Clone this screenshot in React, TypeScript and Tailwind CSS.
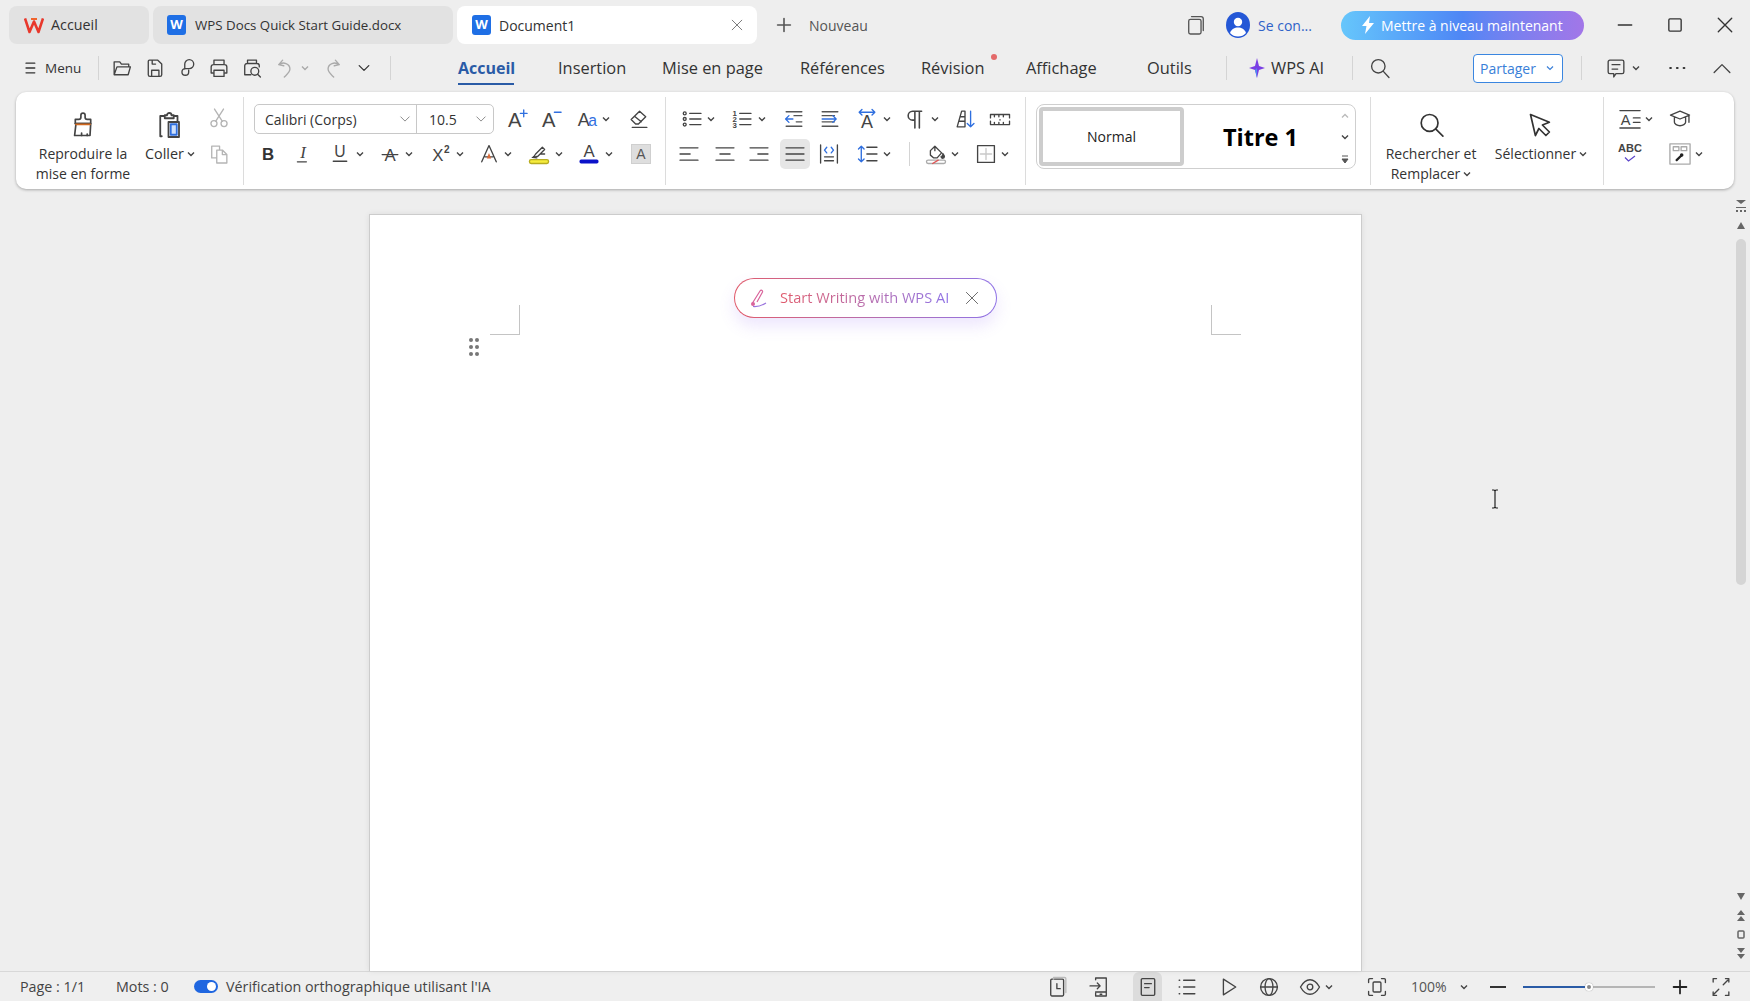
import type { ReactNode } from "react"

function Ico({ children, size = 20, className = "", stroke = "#444" }: { children: ReactNode; size?: number; className?: string; stroke?: string }) {
  return (
    <svg width={size} height={size} viewBox="0 0 20 20" fill="none" stroke={stroke} strokeWidth={1.2} strokeLinecap="round" strokeLinejoin="round" className={"shrink-0 overflow-visible " + (size === 20 ? "scale-[1.12] " : "") + className}>
      {children}
    </svg>
  )
}

function Chev({ className = "" }: { className?: string }) {
  return (
    <svg width="8" height="6" viewBox="0 0 8 6" fill="none" stroke="#444" strokeWidth={1.4} className={"shrink-0 " + className}>
      <path d="M1 1.5 4 4.5 7 1.5" />
    </svg>
  )
}

function Sep({ className = "" }: { className?: string }) {
  return <div className={"h-[24px] w-px shrink-0 bg-[#d4d4d4] " + className} />
}

function Letter({ ch, x = 10, y = 15, size = 16, weight = 400, fill = "#444", style = "normal", family = "'Liberation Sans',sans-serif" }: { ch: string; x?: number; y?: number; size?: number; weight?: number; fill?: string; style?: string; family?: string }) {
  return (
    <text x={x} y={y} fontSize={size} fontWeight={weight} fill={fill} stroke="none" textAnchor="middle" fontStyle={style} fontFamily={family}>
      {ch}
    </text>
  )
}

function WordIcon() {
  return (
    <div className="flex h-[20px] w-[19px] shrink-0 items-center justify-center rounded-[3px] bg-[#1f6fe5] text-[13px] font-bold text-white">W</div>
  )
}

function BigButton({ icon, children, className = "" }: { icon: ReactNode; children: ReactNode; className?: string }) {
  return (
    <div className={"flex shrink-0 flex-col items-center pt-[14px] text-center text-[14px] leading-[20px] text-[#333] " + className}>
      <div className="flex h-[28px] items-center justify-center">{icon}</div>
      <div className="mt-[5px] whitespace-nowrap">{children}</div>
    </div>
  )
}

function Row({ children }: { children: ReactNode }) {
  return <div className="flex h-[30px] items-center">{children}</div>
}

export default function App() {
  return (
    <div className="flex h-screen w-full flex-col overflow-hidden bg-[#eeeeee] font-['Open_Sans','Noto_Sans',sans-serif] text-[#333]">
      {/* title bar */}
      <div className="flex h-[49px] shrink-0 items-center pl-[9px] pt-[6px] pb-[5px] text-[14px]">
        <div className="flex h-[38px] w-[140px] shrink-0 items-center rounded-[8px] bg-[#e2e2e2] pl-[15px]">
          <svg width="20" height="18" viewBox="0 0 20 18" fill="none" className="shrink-0">
            <path d="M1 2.5 5.5 16 10 5.5 14.5 16 19 2.5" stroke="#e8382c" strokeWidth={2.6} strokeLinejoin="round" />
            <path d="M7 3h6" stroke="#f0642e" strokeWidth={2} />
          </svg>
          <span className="ml-[7px] text-[14.3px]">Accueil</span>
        </div>
        <div className="ml-[4px] flex h-[38px] w-[300px] shrink-0 items-center rounded-[8px] bg-[#e2e2e2] pl-[14px]">
          <WordIcon />
          <span className="ml-[9px] whitespace-nowrap pt-px text-[13.3px]">WPS Docs Quick Start Guide.docx</span>
        </div>
        <div className="ml-[4px] flex h-[38px] w-[300px] shrink-0 items-center rounded-[8px] bg-white pl-[15px]">
          <WordIcon />
          <span className="ml-[8px]">Document1</span>
          <Ico size={16} stroke="#777" className="ml-auto mr-[12px]"><path d="M4 4l12 12M16 4 4 16" /></Ico>
        </div>
        <Ico size={16} stroke="#555" className="ml-[19px]"><path d="M10 2v16M2 10h16" strokeWidth={2} /></Ico>
        <span className="ml-[17px] w-[59px] shrink-0 text-[#555]">Nouveau</span>
        <Ico className="ml-[318px]" stroke="#555">
          <rect x="3.5" y="5" width="11" height="13" rx="1.5" />
          <path d="M6 2.5h8.5a2 2 0 0 1 2 2V15" />
        </Ico>
        <svg width="24" height="26" viewBox="0 0 24 26" className="ml-[20px] shrink-0">
          <ellipse cx="12" cy="13" rx="12" ry="13" fill="#2457d6" />
          <circle cx="12" cy="10" r="4.2" fill="#fff" />
          <path d="M4 21c1.5-4 4.5-5.5 8-5.5s6.500 1.500 8 5.500c-2 2.500-5 3.500-8 3.500s-6-1-8-3.500z" fill="#fff" />
        </svg>
        <span className="ml-[8px] w-[54px] shrink-0 whitespace-nowrap text-[#2f62c8]">Se con...</span>
        <div className="ml-[29px] flex h-[29px] w-[243px] shrink-0 items-center rounded-full bg-linear-to-r from-[#66c6fb] via-[#4f86f5] to-[#a276e8] pl-[19px] text-white">
          <svg width="16" height="18" viewBox="0 0 16 18" className="shrink-0"><path d="M10 0 2 10h4.500L5 18l9-11H9z" fill="#fff" /></svg>
          <span className="ml-[5px] whitespace-nowrap">Mettre à niveau maintenant</span>
        </div>
        <Ico className="ml-[31px]" stroke="#333"><path d="M4 10h12" /></Ico>
        <Ico className="ml-[30px]" stroke="#333"><rect x="4.500" y="4.500" width="11" height="11" rx="1" /></Ico>
        <Ico className="ml-[30px]" stroke="#333"><path d="M4 4l12 12M16 4 4 16" /></Ico>
      </div>

      {/* menu bar */}
      <div className="flex h-[38px] shrink-0 items-center text-[16.4px]">
        <Ico size={16} stroke="#333" className="ml-[22px]"><path d="M5 4h11M5 10h11M5 16h11" strokeWidth={1.6} /></Ico>
        <span className="ml-[7px] w-[37px] shrink-0 text-[13.5px]">Menu</span>
        <Sep className="ml-[16px]" />
        <Ico className="ml-[13px]"><path d="M3 16V4.500h5l1.500 2H16V9M3 16h12.500l2-7H5.500L3 16z" /></Ico>
        <Ico className="ml-[13px]"><path d="M5 3h7.500L16 6.500V16a1.500 1.500 0 0 1-1.500 1.500h-9A1.500 1.500 0 0 1 4 16V4a1 1 0 0 1 1-1zM7 17.500V12h6.500v5.500M7.500 3v3.500h3" /></Ico>
        <Ico className="ml-[12px]"><path d="M8 11V6.500a4 4 0 1 1 4 4H8.500a3 3 0 1 0 3 3V12" /></Ico>
        <Ico className="ml-[12px]"><path d="M5.500 7V3h9v4M4.500 14.500H3V9a2 2 0 0 1 2-2h10a2 2 0 0 1 2 2v5.500h-1.500M5.500 12h9v5.500h-9z" /></Ico>
        <Ico className="ml-[13px]"><path d="M6 6V3h8v3M9 16H3.500V8a2 2 0 0 1 2-2h9a2 2 0 0 1 2 2v1" /><circle cx="12.500" cy="13" r="3.500" /><path d="M15 15.500l2.500 2.500" /></Ico>
        <Ico className="ml-[14px]" stroke="#aaa"><path d="M7 3 3.500 7l4.500 1M3.500 7c4-3 10-1 10 4 0 3-3 5-5 7" /></Ico>
        <Chev className="ml-[5px] opacity-40" />
        <Ico className="ml-[13px]" stroke="#aaa"><path d="M13 3l3.500 4-4.500 1M16.500 7c-4-3-10-1-10 4 0 3 3 5 5 7" /></Ico>
        <Ico size={16} stroke="#333" className="ml-[14px]"><path d="M4 7l6 6 6-6" strokeWidth={1.6} /></Ico>
        <Sep className="ml-[18px]" />
        <div className="relative ml-[67px] w-[56px] shrink-0 whitespace-nowrap text-[16px] font-bold text-[#2a5ba6]">
          Accueil
          <div className="absolute -bottom-[5px] left-0 h-[2px] w-full bg-[#2a5ba6]" />
        </div>
        <span className="ml-[44px] w-[66px] shrink-0">Insertion</span>
        <span className="ml-[38px] w-[101px] shrink-0 whitespace-nowrap">Mise en page</span>
        <span className="ml-[37px] w-[81px] shrink-0">Références</span>
        <div className="relative ml-[40px] w-[62px] shrink-0">
          Révision
          <div className="absolute -top-[2px] left-[70px] h-[6px] w-[6px] rounded-full bg-[#e46a6a]" />
        </div>
        <span className="ml-[43px] w-[71px] shrink-0">Affichage</span>
        <span className="ml-[50px] w-[44px] shrink-0">Outils</span>
        <Sep className="ml-[35px]" />
        <svg width="16" height="20" viewBox="0 0 16 20" className="ml-[22px] shrink-0">
          <path d="M8 0 10 8l6 2-6 2-2 8-2-8-6-2 6-2z" fill="#7a3fe4" />
          <path d="M8 10v10l-2-8z" fill="#4d8df0" />
        </svg>
        <span className="ml-[6px] w-[56px] shrink-0 whitespace-nowrap">WPS AI</span>
        <Sep className="ml-[25px]" />
        <Ico className="ml-[17px]"><circle cx="8.500" cy="8.500" r="6" /><path d="M13 13l5 5.500" /></Ico>
        <div className="ml-[83px] flex h-[29px] w-[90px] shrink-0 items-center rounded-[4px] border border-[#3a86e0] bg-white pl-[6px] text-[14px] text-[#3a7fd8]">
          Partager
          <svg width="8" height="6" viewBox="0 0 8 6" fill="none" stroke="#3a7fd8" strokeWidth={1.2} className="ml-auto mr-[8px]"><path d="M1 1.500 4 4.500 7 1.500" /></svg>
        </div>
        <Sep className="ml-[18px]" />
        <Ico className="ml-[24px]"><path d="M4.500 3h11a1.500 1.500 0 0 1 1.500 1.500v9a1.500 1.500 0 0 1-1.500 1.500H10l-2 3v-3H4.500A1.500 1.500 0 0 1 3 13.500v-9A1.500 1.500 0 0 1 4.500 3zM6.500 7h7M6.500 11h5" /></Ico>
        <Chev className="ml-[6px]" />
        <Ico className="ml-[27px]" stroke="#333"><path d="M4 10h.5M10 10h.5M16 10h.5" strokeWidth={2} /></Ico>
        <Ico className="ml-[25px]"><path d="M3 14l7-7 7 7" /></Ico>
      </div>

      {/* ribbon */}
      <div className="ml-[16px] mt-[5px] flex h-[97px] w-[1718px] shrink-0 rounded-[10px] bg-white py-[5px] shadow-[0_1px_3px_rgba(0,0,0,0.3)]">
        <div className="flex h-[88px] w-[228px] shrink-0 border-r border-[#dcdcdc] pl-[21px]">
          <BigButton
            className="w-[92px]"
            icon={
              <Ico size={28}>
                <path d="M8.500 4.500V3a1.500 1.500 0 0 1 3 0v1.500c0 1 .5 1.500 1.500 1.500h2.500v3H4.500V6H7c1 0 1.500-.5 1.500-1.500z" />
                <path d="M4.500 9h11l-.5 8.500H4l1-8.500z" />
                <path d="M5 9.500h10" stroke="#d2691e" />
                <path d="M9 17.500v-1.800M13 17.500v-1" />
              </Ico>
            }
          >
            Reproduire la
            <br />
            mise en forme
          </BigButton>
          <BigButton
            className="ml-[11px] w-[60px]"
            icon={
              <Ico size={30}>
                <path d="M4.500 17.500H3.500V4h3M12.500 4h2.500v3.500M6.500 5.500V3.500H8a1.500 1.500 0 0 1 3 0h1.500v2z" />
                <rect x="9" y="8" width="7" height="10" fill="#fff" stroke="#444" />
                <rect x="10.500" y="9.500" width="4" height="7" fill="#cfe0fb" stroke="#2f6fdf" />
              </Ico>
            }
          >
            <span className="inline-flex items-center text-[14.4px]">Coller<Chev className="ml-[3px]" /></span>
          </BigButton>
          <div className="ml-[9px] flex flex-col pt-[11px]">
            <Ico stroke="#b5b5b5"><circle cx="5.500" cy="15" r="2.700" /><circle cx="14.500" cy="15" r="2.700" /><path d="M7 13 14 2M13 13 6 2" /></Ico>
            <Ico stroke="#b5b5b5" className="mt-[16px]"><path d="M7.500 13.500H3.500V3h7v3M8 6.500h5l4 4V18H8zM13 6.500V10.500h4" /></Ico>
          </div>
        </div>

        <div className="flex h-[88px] w-[422px] shrink-0 flex-col gap-[5px] border-r border-[#dcdcdc] pt-[7px]">
          <Row>
            <div className="ml-[10px] flex h-[30px] w-[240px] shrink-0 items-center rounded-[5px] border border-[#c8c8c8] text-[14px]">
              <div className="flex h-full w-[162px] items-center border-r border-[#c8c8c8] pl-[10px]">
                Calibri (Corps)
                <Ico size={14} stroke="#777" className="ml-auto mr-[4px]"><path d="M4 7l6 6 6-6" /></Ico>
              </div>
              <div className="flex h-full flex-1 items-center pl-[12px]">
                10.5
                <Ico size={14} stroke="#777" className="ml-auto mr-[5px]"><path d="M4 7l6 6 6-6" /></Ico>
              </div>
            </div>
            <Ico className="ml-[13px]"><Letter ch="A" x={8} y={17} size={18} /><path d="M13 5h6M16 2v6" stroke="#2f6fdf" /></Ico>
            <Ico className="ml-[14px]"><Letter ch="A" x={8} y={17} size={18} /><path d="M13 4h6" stroke="#2f6fdf" /></Ico>
            <Ico className="ml-[16px]"><Letter ch="A" x={7} y={16} size={16} /><Letter ch="a" x={15} y={16} size={14} fill="#2f6fdf" /></Ico>
            <Chev className="ml-[5px]" />
            <Ico className="ml-[19px]"><path d="M3 10.500 10.500 3l5.500 5-6.500 6.500H7zM6 7.500l6 5M4 17.500h13" /></Ico>
          </Row>
          <Row>
            <Ico className="ml-[14px]"><Letter ch="B" y={15.500} size={15} weight={700} fill="#333" /></Ico>
            <Ico className="ml-[15px]"><Letter ch="I" y={14} size={15} style="italic" family="'Liberation Serif',serif" /><path d="M5 17h8" /></Ico>
            <Ico className="ml-[17px]"><Letter ch="U" y={13} size={14} /><path d="M4 16.500h12" /></Ico>
            <Chev className="ml-[6px]" />
            <Ico className="ml-[16px]"><Letter ch="A" y={16} size={15} /><path d="M3 10.500h14" /></Ico>
            <Chev className="ml-[5px]" />
            <Ico className="ml-[17px]"><Letter ch="X" x={8} y={16} size={15} /><Letter ch="2" x={16} y={9} size={9} weight={700} /></Ico>
            <Chev className="ml-[6px]" />
            <Ico className="ml-[15px]"><Letter ch="A" y={17} size={20} fill="#fff" /><path d="M3.500 17 10 2.500 16.500 17M6.500 12.500h7" /><path d="M10 9 12 14H8z" fill="#d96b3a" stroke="none" /></Ico>
            <Chev className="ml-[5px]" />
            <Ico className="ml-[17px]"><path d="M5 13l2-3 6-6 2 2-6 6zM4 13l4 .5M11 10h4" /><rect x="1.500" y="15" width="17" height="3.500" rx="1.500" fill="#f6ec3c" stroke="#b7ac20" /></Ico>
            <Chev className="ml-[6px]" />
            <Ico className="ml-[16px]"><Letter ch="A" y={13} size={15} /><rect x="1.500" y="15" width="17" height="3.500" rx="1.500" fill="#0b12c9" stroke="none" /></Ico>
            <Chev className="ml-[6px]" />
            <div className="ml-[18px] flex h-[20px] w-[20px] shrink-0 items-center justify-center border border-[#cfcfcf] bg-[#dedede] font-['Liberation_Sans',sans-serif] text-[14px] text-[#555]">A</div>
          </Row>
        </div>

        <div className="flex h-[88px] w-[360px] shrink-0 flex-col gap-[5px] border-r border-[#dcdcdc] pt-[7px]">
          <Row>
            <Ico className="ml-[16px]"><path d="M8 5h10M8 10h10M8 15h10" /><circle cx="3.500" cy="5" r="1.300" /><circle cx="3.500" cy="10" r="1.300" /><circle cx="3.500" cy="15" r="1.300" /></Ico>
            <Chev className="ml-[5px]" />
            <Ico className="ml-[17px]"><Letter ch="1" x={3.500} y={7} size={7} weight={700} /><Letter ch="2" x={3.500} y={12.500} size={7} weight={700} /><Letter ch="3" x={3.500} y={18} size={7} weight={700} /><path d="M8 5h10M8 10h10M8 15h10" /></Ico>
            <Chev className="ml-[6px]" />
            <Ico className="ml-[18px]"><path d="M3 3.500h14M3 16.500h14M10 7H17M12 12.500h5" stroke="#555" /><path d="M9 10H2.500M5.500 7 2.500 10l3 3" stroke="#2f6fdf" /></Ico>
            <Ico className="ml-[16px]"><path d="M3 3.500h14M3 16.500h14M14 7H3M14 12.500H3" stroke="#555" /><path d="M3 10h12M12.500 7l3 3-3 3" stroke="#2f6fdf" /></Ico>
            <Ico className="ml-[17px]"><Letter ch="A" y={18} size={16} /><path d="M3 4h14M5.500 1.500 3 4l2.500 2.500M14.500 1.500 17 4l-2.500 2.500" stroke="#2f6fdf" /></Ico>
            <Chev className="ml-[6px]" />
            <Ico className="ml-[15px]"><path d="M9 3H7a4 4 0 0 0 0 8h2M9 3v15M13 3v15M9 3h6" strokeWidth={1.4} /></Ico>
            <Chev className="ml-[5px]" />
            <Ico className="ml-[16px]"><path d="M3 17 7 3h3v14zM4.500 12H10M5.500 8H10" /><path d="M15 3v14M12 14l3 3 3-3" stroke="#2f6fdf" /></Ico>
            <Ico className="ml-[15px]"><path d="M1.500 6h17v3M1.500 6v3M1.500 15h17v-3M1.500 15v-3M5 6v2M9 6v2M13 6v2M5 15v-2M9 15v-2M13 15v-2M10 10.500v.5" /></Ico>
          </Row>
          <Row>
            <Ico className="ml-[13px]"><path d="M2 4.500h16M2 10h9M2 15.500h16" /></Ico>
            <Ico className="ml-[16px]"><path d="M2 4.500h16M5.500 10h9M2 15.500h16" /></Ico>
            <Ico className="ml-[14px]"><path d="M2 4.500h16M9 10h9M2 15.500h16" /></Ico>
            <div className="ml-[11px] flex h-[30px] w-[30px] shrink-0 items-center justify-center rounded-[5px] bg-[#e6e6e6]">
              <Ico><path d="M2 4.500h16M2 10h16M2 15.500h16" /></Ico>
            </div>
            <Ico className="ml-[9px]"><path d="M2.500 2v16M17.500 2v16M6 12.500h8M6 16h8" /><path d="M8 4 6 6.500 8 9M12 4l2 2.500L12 9" stroke="#2f6fdf" /></Ico>
            <Ico className="ml-[19px]"><path d="M4 3v14M1.500 5.500 4 3l2.500 2.500M1.500 14.500 4 17l2.500-2.500" stroke="#2f6fdf" /><path d="M9 4h9M9 10h9M9 16h9" /></Ico>
            <Chev className="ml-[5px]" />
            <Sep className="ml-[18px]" />
            <Ico className="ml-[16px]"><path d="M5 7l4-4 6 6-4 4.500H8L5 11zM9 3v4" /><path d="M16 9.500c1 1.500 1.500 2 1.500 2.800a1.500 1.500 0 0 1-3 0" fill="#444" /><rect x="1.500" y="15.500" width="17" height="3" rx="1.500" stroke="#aaa" /><path d="M7 18.500 12 15.500" stroke="#e05555" /></Ico>
            <Chev className="ml-[5px]" />
            <Ico className="ml-[17px]"><rect x="2.500" y="2.500" width="15" height="15" /><path d="M10 5v10M5 10h10" stroke="#c9c9c9" /></Ico>
            <Chev className="ml-[5px]" />
          </Row>
        </div>

        <div className="flex h-[88px] w-[345px] shrink-0 border-r border-[#dcdcdc] pl-[10px] pt-[7px]">
          <div className="flex h-[65px] w-[320px] shrink-0 items-center rounded-[8px] border border-[#cfcfcf] pl-[2px]">
            <div className="flex h-[59px] w-[145px] shrink-0 items-center justify-center rounded-[4px] border-[4px] border-[#cdcdcd] text-[14px] text-[#222]">Normal</div>
            <div className="flex w-[152px] shrink-0 items-center justify-center pl-[1px] pt-[2px] text-[23.5px] font-bold leading-none text-black">Titre 1</div>
            <div className="flex w-[18px] shrink-0 flex-col items-center gap-[15px] pt-[4px]">
              <svg width="8" height="6" viewBox="0 0 8 6" fill="none" stroke="#bbb" strokeWidth={1.4}><path d="M1 4.500 4 1.500 7 4.500" /></svg>
              <Chev />
              <svg width="8" height="9" viewBox="0 0 8 9" fill="#555" stroke="#555" strokeWidth={1}><path d="M1 1h6" /><path d="M1 4l3 4 3-4z" /></svg>
            </div>
          </div>
        </div>

        <div className="flex h-[88px] w-[233px] shrink-0 border-r border-[#dcdcdc]">
          <BigButton className="ml-[12px] w-[96px]" icon={<Ico size={28} stroke="#333"><circle cx="9" cy="8.500" r="6" /><path d="M13.500 13l5 5" /></Ico>}>
            Rechercher et
            <br />
            <span className="inline-flex items-center">Remplacer<Chev className="ml-[3px]" /></span>
          </BigButton>
          <BigButton className="ml-[12px] w-[100px]" icon={<Ico size={28} stroke="#333"><path d="M2.500 2.500 16 8l-5 2 5 5-2.500 2.500-5-5L6 17.500z" /></Ico>}>
            <span className="inline-flex items-center">Sélectionner<Chev className="ml-[3px]" /></span>
          </BigButton>
        </div>

        <div className="flex h-[88px] flex-1 flex-col gap-[5px] pt-[7px]">
          <Row>
            <Ico className="ml-[16px]"><path d="M1 2.500h18M1 18h18" /><Letter ch="A" x={6} y={15} size={13} /><path d="M13 9h6M13 13h6" /></Ico>
            <Chev className="ml-[5px]" />
            <Ico className="ml-[17px]"><path d="M10 3 1.500 6.500 10 10l8.500-3.500zM5 8.500V13c0 1.500 2.500 3 5 3s5-1.500 5-3V8.500M18 7v6" /></Ico>
          </Row>
          <Row>
            <div className="ml-[16px] flex h-[24px] w-[20px] shrink-0 flex-col items-center font-['Liberation_Sans',sans-serif] text-[11px] font-bold leading-[13px] text-[#444]">
              ABC
              <svg width="14" height="7" viewBox="0 0 14 7" fill="none" stroke="#5b45c9" strokeWidth={1.2}><path d="M2 2.500 5.500 6 12 1" /></svg>
            </div>
            <Ico className="ml-[30px]" stroke="#aaa"><rect x="1" y="1" width="18" height="18" /><path d="M4 3.500h5v3.500H4zM11 3.500h5v3.500h-5z" /><path d="M7 15.500l4-4" stroke="#222" strokeWidth={2} /><circle cx="11.500" cy="11" r="1.600" fill="#222" stroke="none" /></Ico>
            <Chev className="ml-[5px]" />
          </Row>
        </div>
      </div>

      {/* document area */}
      <div className="relative flex min-h-0 flex-1 pl-[369px]">
        <div className="relative mt-[25px] w-[993px] shrink-0 border-x border-t border-[#cccccc] bg-white shadow-[0_0_6px_rgba(0,0,0,0.08)]">
          <div className="absolute left-[364px] top-[63px] h-[40px] w-[263px] rounded-full bg-linear-to-r from-[#e0596a] to-[#8f72e6] p-px shadow-[0_8px_16px_rgba(140,100,240,0.16)]">
            <div className="flex h-full w-full items-center rounded-full bg-white pl-[15px] text-[14.6px]">
              <svg width="18" height="20" viewBox="0 0 18 20" fill="none" stroke="#d9649b" strokeWidth={1.2} className="shrink-0">
                <path d="M2.500 15 10 3c1-1.500 3-.5 2.500 1L7 14" />
                <circle cx="3" cy="16" r="2" fill="#d9649b" stroke="none" />
                <path d="M3 18.500c5 .5 9-1 13-3.500" stroke="#9a74dd" />
              </svg>
              <span className="ml-[12px] whitespace-nowrap bg-linear-to-r from-[#e0596a] to-[#8f72e6] bg-clip-text text-transparent">Start Writing with WPS AI</span>
              <Ico size={16} stroke="#666" className="ml-auto mr-[16px]"><path d="M3 3l14 14M17 3 3 17" /></Ico>
            </div>
          </div>
          <div className="absolute left-[120px] top-[90px] h-[30px] w-[30px] border-b border-r border-[#c4c4c4]" />
          <div className="absolute left-[841px] top-[90px] h-[30px] w-[30px] border-b border-l border-[#c4c4c4]" />
          <div className="absolute left-[99px] top-[123px] grid grid-cols-2 gap-x-[2px] gap-y-[3px]">
            <div className="h-[4px] w-[4px] rounded-full bg-[#777]" />
            <div className="h-[4px] w-[4px] rounded-full bg-[#777]" />
            <div className="h-[4px] w-[4px] rounded-full bg-[#777]" />
            <div className="h-[4px] w-[4px] rounded-full bg-[#777]" />
            <div className="h-[4px] w-[4px] rounded-full bg-[#777]" />
            <div className="h-[4px] w-[4px] rounded-full bg-[#777]" />
          </div>
        </div>

        <div className="absolute left-[1490px] top-[300px]">
          <svg width="10" height="20" viewBox="0 0 10 20" fill="none" stroke="#222" strokeWidth={1.2}><path d="M2 1h2l1 1 1-1h2M2 19h2l1-1 1 1h2M5 2v16" /></svg>
        </div>

        <div className="ml-auto mr-[3px] flex w-[12px] flex-col items-center pt-[11px]">
          <svg width="12" height="12" viewBox="0 0 12 12" fill="#666"><path d="M1 0h10L6 4z" /><path d="M1 7h10v1H1zM1 10h2v2H1zM5 10h2v2H5zM9 10h2v2H9z" /></svg>
          <svg width="8" height="7" viewBox="0 0 8 7" fill="#666" className="mt-[10px]"><path d="M4 0 8 7H0z" /></svg>
          <div className="mt-[10px] h-[346px] w-[10px] rounded-full bg-[#d5d5d5]" />
          <svg width="8" height="7" viewBox="0 0 8 7" fill="#666" className="mt-[308px]"><path d="M4 7 8 0H0z" /></svg>
          <svg width="8" height="12" viewBox="0 0 8 12" fill="#666" className="mt-[10px]"><path d="M4 0 8 5H0zM4 6l4 5H0z" /></svg>
          <svg width="8" height="9" viewBox="0 0 8 9" fill="none" stroke="#666" strokeWidth={1.5} className="mt-[8px]"><rect x="1" y="1" width="6" height="7" rx="1" /></svg>
          <svg width="8" height="12" viewBox="0 0 8 12" fill="#666" className="mt-[9px]"><path d="M4 11 8 6H0zM4 5l4-5H0z" /></svg>
        </div>
      </div>

      {/* status bar */}
      <div className="flex h-[30px] shrink-0 items-center border-t border-[#d8d8d8] bg-[#efefef] text-[14.3px] text-[#444]">
        <span className="ml-[20px] w-[66px] shrink-0 whitespace-nowrap">Page : 1/1</span>
        <span className="ml-[30px] w-[52px] shrink-0 whitespace-nowrap">Mots : 0</span>
        <div className="ml-[26px] flex h-[13px] w-[24px] shrink-0 items-center justify-end rounded-full bg-[#1f66e0] pr-[2px]">
          <div className="h-[9px] w-[9px] rounded-full bg-white" />
        </div>
        <span className="ml-[8px] whitespace-nowrap">Vérification orthographique utilisant l&apos;IA</span>
        <div className="ml-auto flex h-full items-center">
          <Ico><rect x="3.500" y="3" width="11.500" height="15" rx="1" /><path d="M9 7v4.500h3" /><path d="M6 3V1.500h10a1 1 0 0 1 1 1V15" stroke="#bbb" /></Ico>
          <Ico className="ml-[21px]"><path d="M7 3.500V2h9.500v16H7v-2.500M7 14.500h9.500M11 16.500h1.500M2 9h9M8.500 6.500 11 9l-2.500 2.500" /></Ico>
          <div className="ml-[24px] flex h-full w-[29px] items-center justify-center rounded-t-[6px] bg-[#dcdcdc]">
            <Ico><rect x="4" y="2.500" width="12" height="15" rx="1" /><path d="M7 7h6M7 10.500h4" /></Ico>
          </div>
          <Ico className="ml-[15px]"><path d="M7 4h10M7 10h10M7 16h10M3 4h.5M3 10h.5M3 16h.5" /></Ico>
          <Ico className="ml-[22px]"><path d="M5 3v14l11-7z" /></Ico>
          <Ico className="ml-[20px]"><circle cx="10" cy="10" r="7.500" /><ellipse cx="10" cy="10" rx="3.500" ry="7.500" /><path d="M2.500 10h15" /></Ico>
          <Ico className="ml-[21px]"><path d="M1.500 10C4 5.500 7 3.500 10 3.500s6 2 8.500 6.500C16 14.500 13 16.500 10 16.500S4 14.500 1.500 10z" /><circle cx="10" cy="10" r="2.500" /></Ico>
          <Chev className="ml-[5px]" />
          <Ico className="ml-[34px]"><path d="M6 2.500H3.500a1 1 0 0 0-1 1V6M14 2.500h2.500a1 1 0 0 1 1 1V6M6 17.500H3.500a1 1 0 0 1-1-1V14M14 17.500h2.500a1 1 0 0 0 1-1V14" /><rect x="6.500" y="5.500" width="7" height="9" rx="1" /></Ico>
          <span className="ml-[24px] w-[37px] shrink-0 text-[14px] text-[#555]">100%</span>
          <Chev className="ml-[12px]" />
          <div className="ml-[22px] h-[2px] w-[16px] bg-[#333]" />
          <div className="relative ml-[17px] flex h-[2px] w-[132px] items-center bg-[#b5b5b5]">
            <div className="h-[2px] w-[66px] bg-[#2a5ba6]" />
            <div className="absolute left-[62px] h-[8px] w-[8px] rounded-full border-2 border-white bg-[#888] shadow-[0_0_1px_#888]" />
          </div>
          <Ico size={16} stroke="#222" className="ml-[17px]"><path d="M10 2v16M2 10h16" strokeWidth={2.200} /></Ico>
          <Ico className="ml-[23px] mr-[19px]"><path d="M6 2.500H3v3M14 2.500h3v3M3 14.500v3h3M17 14.500v3h-3M12 8l4-4M8 12l-4 4" /></Ico>
        </div>
      </div>
    </div>
  )
}
